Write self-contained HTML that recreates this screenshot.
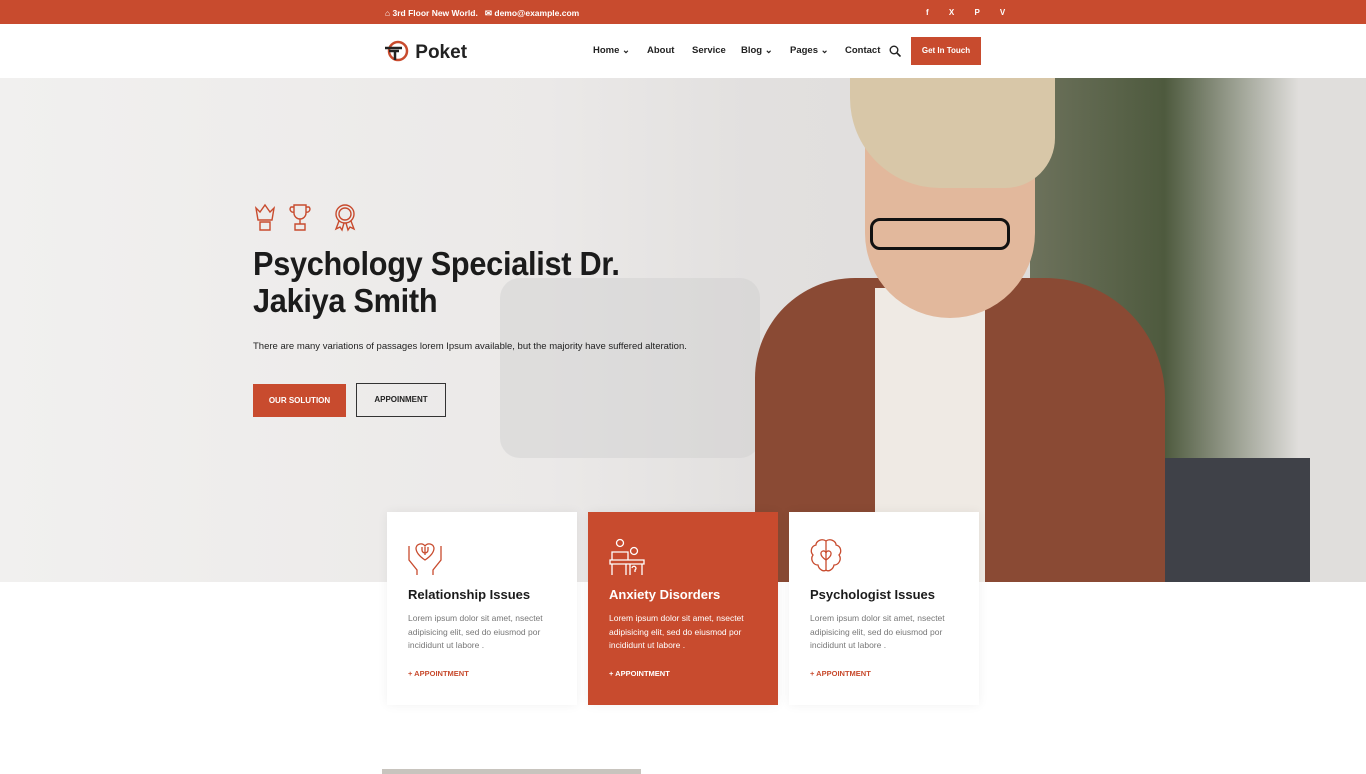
<!DOCTYPE html>
<html><head><meta charset="utf-8"><style>
*{margin:0;padding:0;box-sizing:border-box}
body{width:1366px;height:774px;overflow:hidden;background:#fff;font-family:"Liberation Sans",sans-serif;position:relative}
.top{position:absolute;left:0;top:0;width:1366px;height:24px;background:#c84b2e;color:#fff;font-size:8.5px;font-weight:bold}
.top .l{position:absolute;left:385px;top:8px}
.top .r{position:absolute;left:926px;top:8px;font-size:8px;letter-spacing:9px}
.nav{position:absolute;top:24px;left:0;width:1366px;height:54px;background:#fff}
.logo{position:absolute;left:384px;top:16px;font-size:19px;font-weight:bold;color:#222}
.menu{position:absolute;top:21px;font-size:9.5px;font-weight:bold;color:#222}
.btn{position:absolute;left:911px;top:13px;width:70px;height:28px;background:#c84b2e;color:#fff;font-size:8px;font-weight:bold;text-align:center;line-height:28px}
.hero{position:absolute;top:78px;left:0;width:1366px;height:504px;background:linear-gradient(90deg,#f1f0ef 0%,#ebe9e8 40%,#e2e0df 55%,#dcdad8 100%);overflow:hidden}
h1{position:absolute;left:253px;top:245px;font-size:33px;line-height:37px;color:#1b1b1b;font-weight:bold;letter-spacing:-0.3px;transform:scaleX(0.93);transform-origin:left}
.p{position:absolute;left:253px;top:341px;font-size:9.5px;color:#222}
.b1{position:absolute;left:253px;top:384px;width:93px;height:33px;background:#c84b2e;color:#fff;font-size:8px;font-weight:bold;text-align:center;line-height:33px}
.b2{position:absolute;left:356px;top:383px;width:90px;height:34px;border:1px solid #333;color:#222;font-size:8px;font-weight:bold;text-align:center;line-height:32px}
.card{position:absolute;top:512px;width:190px;height:193px;background:#fff;box-shadow:0 0 10px rgba(0,0,0,.06)}
.card h3{position:absolute;top:75px;left:21px;font-size:13px;color:#1b1b1b}
.card p{position:absolute;top:100px;left:21px;width:155px;font-size:8.5px;line-height:13.6px;color:#777}
.card a{position:absolute;top:157px;left:21px;font-size:7.5px;font-weight:bold;color:#c84b2e}
.card svg{position:absolute;left:20px;top:26px}
.card.o{background:#c84b2e}.card.o h3,.card.o p,.card.o a{color:#fff}
</style></head><body>
<div class="top"><span class="l">⌂ 3rd Floor New World. &nbsp;&nbsp;✉ demo@example.com</span><span class="r">f X P V</span></div>
<div class="nav">
<div class="logo"><svg width="26" height="22" viewBox="0 0 26 22" style="vertical-align:-4px"><circle cx="14" cy="11" r="9" fill="none" stroke="#c84b2e" stroke-width="2.5"/><path d="M1 8h17M5 11h10M11 11v9" stroke="#222" stroke-width="2.5" fill="none"/></svg> Poket</div>
<span class="menu" style="left:593px">Home ⌄</span><span class="menu" style="left:647px">About</span><span class="menu" style="left:692px">Service</span><span class="menu" style="left:741px">Blog ⌄</span><span class="menu" style="left:790px">Pages ⌄</span><span class="menu" style="left:845px">Contact</span>
<svg style="position:absolute;left:889px;top:21px" width="12" height="12" viewBox="0 0 12 12"><circle cx="5" cy="5" r="3.8" fill="none" stroke="#222" stroke-width="1.4"/><path d="M8 8l3.5 3.5" stroke="#222" stroke-width="1.6"/></svg>
<div class="btn">Get In Touch</div>
</div>
<div class="hero">
<div style="position:absolute;left:500px;top:200px;width:260px;height:180px;background:#cfcfcf;opacity:.45;border-radius:20px"></div>
<div style="position:absolute;left:1030px;top:0;width:336px;height:504px;background:linear-gradient(90deg,#6d725c,#4e5a3e 40%,#e0dedc 80%)"></div>
<div style="position:absolute;left:1150px;top:380px;width:160px;height:124px;background:#3f4148"></div>
<div style="position:absolute;left:755px;top:200px;width:410px;height:304px;background:#8a4a34;border-radius:100px 120px 0 0"></div>
<div style="position:absolute;left:875px;top:210px;width:110px;height:294px;background:#efeae4"></div>
<div style="position:absolute;left:865px;top:0;width:170px;height:240px;background:#e2b89c;border-radius:0 0 85px 85px"></div>
<div style="position:absolute;left:850px;top:0;width:205px;height:110px;background:#d8c7a8;border-radius:0 0 50px 90px"></div>
<div style="position:absolute;left:870px;top:140px;width:140px;height:32px;border:3px solid #111;border-radius:10px"></div>
</div>
<svg style="position:absolute;left:252px;top:202px" width="110" height="30" viewBox="0 0 110 30" fill="none" stroke="#c84b2e" stroke-width="1.4"><path d="M4 6l4 4 5-7 5 7 4-4-2 12H6z M8 20h10v8H8z"/><path d="M42 3h12v8a6 6 0 0 1-12 0z M42 5h-3a3 3 0 0 0 3 5 M54 5h3a3 3 0 0 1-3 5 M48 17v5 M43 22h10v6H43z"/><circle cx="93" cy="12" r="9"/><circle cx="93" cy="12" r="6"/><path d="M87 19l-3 8 4-2 2 3 2-7 M99 19l3 8-4-2-2 3-2-7"/></svg>
<h1>Psychology Specialist Dr.<br>Jakiya Smith</h1>
<div class="p">There are many variations of passages lorem Ipsum available, but the majority have suffered alteration.</div>
<div class="b1">OUR SOLUTION</div><div class="b2">APPOINMENT</div>
<div class="card" style="left:387px"><svg width="36" height="38" viewBox="0 0 36 38" fill="none" stroke="#c84b2e" stroke-width="1.3"><path d="M18 22c-6-4-9-8-9-12a5 5 0 0 1 9-2 5 5 0 0 1 9 2c0 4-3 8-9 12z"/><path d="M2 8v14l8 10v5 M34 8v14l-8 10v5 M15 9v3a3 3 0 0 0 6 0V9 M18 9v8"/></svg><h3>Relationship Issues</h3><p>Lorem ipsum dolor sit amet, nsectet adipisicing elit, sed do eiusmod por incididunt ut labore .</p><a>+ APPOINTMENT</a></div>
<div class="card o" style="left:588px"><svg width="38" height="38" viewBox="0 0 38 38" fill="none" stroke="#fff" stroke-width="1.3"><circle cx="12" cy="5" r="3.5"/><circle cx="26" cy="13" r="3.5"/><path d="M4 22v-8h16v8 M2 22h34v4H2z M4 26v11 M18 26v11 M22 26v11 M34 26v11 M24 30a2 2 0 1 1 3 2v2"/></svg><h3>Anxiety Disorders</h3><p>Lorem ipsum dolor sit amet, nsectet adipisicing elit, sed do eiusmod por incididunt ut labore .</p><a>+ APPOINTMENT</a></div>
<div class="card" style="left:789px"><svg width="34" height="36" viewBox="0 0 34 36" fill="none" stroke="#c84b2e" stroke-width="1.3"><path d="M17 3c-4-3-10 0-10 4-5 1-6 7-3 10-3 4 0 10 5 10 1 5 6 7 8 5 2 2 7 0 8-5 5 0 8-6 5-10 3-3 2-9-3-10 0-4-6-7-10-4z M17 3v30"/><path d="M17 22c-3-2-5-4-5-6a2.5 2.5 0 0 1 5-1 2.5 2.5 0 0 1 5 1c0 2-2 4-5 6z"/></svg><h3>Psychologist Issues</h3><p>Lorem ipsum dolor sit amet, nsectet adipisicing elit, sed do eiusmod por incididunt ut labore .</p><a>+ APPOINTMENT</a></div>
<div style="position:absolute;left:382px;top:769px;width:259px;height:5px;background:#c8c4be"></div>
</body></html>
